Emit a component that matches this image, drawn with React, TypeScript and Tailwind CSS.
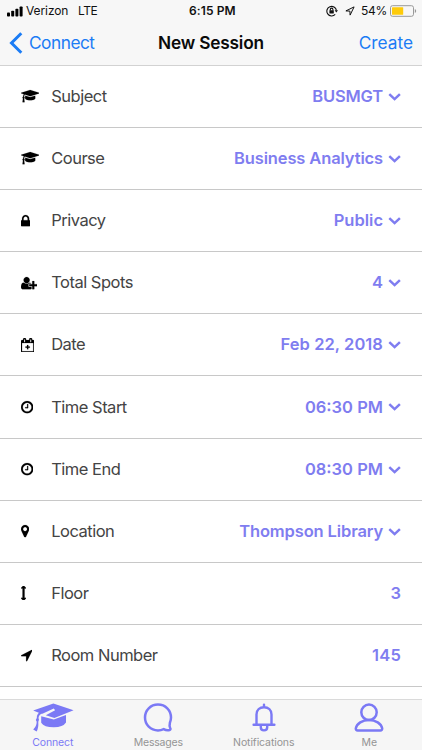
import React from 'react';

interface IconShape {
  viewBox: string;
  width: number;
  path: string;
}

interface SessionField {
  icon: IconShape;
  label: string;
  value: string;
  spacing: string;
  hasPicker: boolean;
}

const cap: IconShape = {
  viewBox: '0 0 2304 1792',
  width: 18.4,
  path: 'M1774 836l18 316q4 69-82 128t-235 93.5-323 34.5-323-34.5-235-93.5-82-128l18-316 574 181q22 7 48 7t48-7zm530-324q0 23-22 31l-1120 352q-4 1-10 1t-10-1l-652-206q-43 34-71 111.5t-34 178.5q63 36 63 109 0 69-58 107l58 433q2 14-8 25-9 11-24 11h-192q-15 0-24-11-10-11-8-25l58-433q-58-38-58-107 0-73 65-111 11-207 98-330l-333-104q-22-8-22-31t22-31l1120-352q4-1 10-1t10 1l1120 352q22 8 22 31z',
};

const lock: IconShape = {
  viewBox: '320 0 1152 1792',
  width: 9.2,
  path: 'M640 768h512v-192q0-106-75-181t-181-75-181 75-75 181v192zm832 96v576q0 40-28 68t-68 28h-960q-40 0-68-28t-28-68v-576q0-40 28-68t68-28h32v-192q0-184 132-316t316-132 316 132 132 316v192h32q40 0 68 28t28 68z',
};

const userPlus: IconShape = {
  viewBox: '0 0 2048 1792',
  width: 16.4,
  path: 'M704 896q-159 0-271.5-112.5t-112.5-271.5 112.5-271.5 271.5-112.5 271.5 112.5 112.5 271.5-112.5 271.5-271.5 112.5zm960 128h352q13 0 22.5 9.5t9.5 22.5v192q0 13-9.5 22.5t-22.5 9.5h-352v352q0 13-9.5 22.5t-22.5 9.5h-192q-13 0-22.5-9.5t-9.5-22.5v-352h-352q-13 0-22.5-9.5t-9.5-22.5v-192q0-13 9.5-22.5t22.5-9.5h352v-352q0-13 9.5-22.5t22.5-9.5h192q13 0 22.5 9.5t9.5 22.5v352zm-736 224q0 52 38 90t90 38h256v238q-68 50-171 50h-874q-121 0-194-69t-73-190q0-53 3.5-103.5t14-109 26.5-108.5 43-97.5 62-81 85.5-53.5 111.5-20q19 0 39 17 79 61 154.5 91.5t164.5 30.5 164.5-30.5 154.5-91.5q20-17 39-17 132 0 217 96h-223q-52 0-90 38t-38 90v192z',
};

const calendar: IconShape = {
  viewBox: '64 0 1664 1792',
  width: 13.3,
  path: 'M192 1664h1408v-1024h-1408v1024zm384-1152v-288q0-14-9-23t-23-9h-64q-14 0-23 9t-9 23v288q0 14 9 23t23 9h64q14 0 23-9t9-23zm768 0v-288q0-14-9-23t-23-9h-64q-14 0-23 9t-9 23v288q0 14 9 23t23 9h64q14 0 23-9t9-23zm384-128v1280q0 52-38 90t-90 38h-1408q-52 0-90-38t-38-90v-1280q0-52 38-90t90-38h128v-96q0-66 47-113t113-47h64q66 0 113 47t47 113v96h384v-96q0-66 47-113t113-47h64q66 0 113 47t47 113v96h128q52 0 90 38t38 90zM820 880h152v196h196v152h-196v196h-152v-196h-196v-152h196z',
};

const clock: IconShape = {
  viewBox: '128 0 1536 1792',
  width: 12.3,
  path: 'M1024 544v448q0 14-9 23t-23 9h-320q-14 0-23-9t-9-23v-64q0-14 9-23t23-9h224v-352q0-14 9-23t23-9h64q14 0 23 9t9 23zm416 352q0-148-73-273t-198-198-273-73-273 73-198 198-73 273 73 273 198 198 273 73 273-73 198-198 73-273zm224 0q0 209-103 385.5t-279.5 279.5-385.5 103-385.5-103-279.5-279.5-103-385.5 103-385.5 279.5-279.5 385.5-103 385.5 103 279.5 279.5 103 385.5z',
};

const marker: IconShape = {
  viewBox: '384 0 1024 1792',
  width: 8.2,
  path: 'M1152 640q0-106-75-181t-181-75-181 75-75 181 75 181 181 75 181-75 75-181zm256 0q0 109-33 179l-364 774q-16 33-47.5 52t-67.5 19-67.5-19-46.5-52l-365-774q-33-70-33-179 0-212 150-362t362-150 362 150 150 362z',
};

const arrowsV: IconShape = {
  viewBox: '448 0 640 1792',
  width: 5.1,
  path: 'M1088 256q0 26-19 45t-45 19h-128v1152h128q26 0 45 19t19 45-19 45l-256 256q-19 19-45 19t-45-19l-256-256q-19-19-19-45t19-45 45-19h128v-1152h-128q-26 0-45-19t-19-45 19-45l256-256q19-19 45-19t45 19l256 256q19 19 19 45z',
};

const locationArrow: IconShape = {
  viewBox: '192 0 1408 1792',
  width: 11.3,
  path: 'M1593 349l-640 1280q-17 35-57 35-5 0-15-2-22-5-35.5-22.5t-13.5-39.5v-576h-576q-22 0-39.5-13.5t-22.5-35.5 4-42 29-30l1280-640q13-7 29-7 27 0 45 19 15 14 18.5 34.5t-6.5 39.5z',
};

const fields: SessionField[] = [
  { icon: cap, label: 'Subject', value: 'BUSMGT', spacing: 'tracking-[-0.15px]', hasPicker: true },
  { icon: cap, label: 'Course', value: 'Business Analytics', spacing: 'tracking-[-0.13px]', hasPicker: true },
  { icon: lock, label: 'Privacy', value: 'Public', spacing: 'tracking-normal', hasPicker: true },
  { icon: userPlus, label: 'Total Spots', value: '4', spacing: 'tracking-normal', hasPicker: true },
  { icon: calendar, label: 'Date', value: 'Feb 22, 2018', spacing: 'tracking-[0.06px]', hasPicker: true },
  { icon: clock, label: 'Time Start', value: '06:30 PM', spacing: 'tracking-normal', hasPicker: true },
  { icon: clock, label: 'Time End', value: '08:30 PM', spacing: 'tracking-normal', hasPicker: true },
  { icon: marker, label: 'Location', value: 'Thompson Library', spacing: 'tracking-[-0.13px]', hasPicker: true },
  { icon: arrowsV, label: 'Floor', value: '3', spacing: 'tracking-normal', hasPicker: false },
  { icon: locationArrow, label: 'Room Number', value: '145', spacing: 'tracking-[0.2px]', hasPicker: false },
];

const FieldRow = ({ field }: { field: SessionField }) => (
  <div className="flex h-[62.1px] shrink-0 items-center border-b border-[#c8c8c8] pl-[20.7px] pr-[21px]">
    <div className="flex w-[30.5px] shrink-0">
      <svg viewBox={field.icon.viewBox} width={field.icon.width} height={14.3} fill="#000" stroke="#000" strokeWidth="20">
        <path d={field.icon.path} />
      </svg>
    </div>
    <span className="text-[16.5px] tracking-[-0.5px] text-[#444]">{field.label}</span>
    <span className={`ml-auto text-[16.5px] font-semibold text-[#7f7df0] ${field.spacing}`}>{field.value}</span>
    {field.hasPicker && (
      <svg className="ml-[5px] mt-px" width="13" height="8" viewBox="0 0 13 8" fill="none" stroke="#7f7df0" strokeWidth="2.5">
        <path d="M1.3 1.2L6.6 6.1L11.9 1.2" />
      </svg>
    )}
  </div>
);

const StatusBar = () => (
  <div className="flex h-[22px] items-center pl-[7px] pr-[5px] text-[12px] text-[#111]">
    <svg width="16" height="11" viewBox="0 0 16 11" fill="#000">
      <rect x="0" y="6.5" width="3" height="4" rx="0.8" />
      <rect x="4.2" y="4.7" width="3" height="5.8" rx="0.8" />
      <rect x="8.4" y="2.7" width="3" height="7.8" rx="0.8" />
      <rect x="12.6" y="0.4" width="3" height="10.1" rx="0.8" />
    </svg>
    <span className="ml-[3px] w-[52px] tracking-[-0.1px]">Verizon</span>
    <span className="w-[20px] tracking-[-0.5px]">LTE</span>
    <span className="ml-[91px] w-[50px] whitespace-nowrap font-semibold tracking-[0.1px]">6:15 PM</span>
    <svg className="ml-auto" width="12" height="12" viewBox="0 0 12 12" fill="none" stroke="#111" strokeWidth="1.1">
      <path d="M9.2 9.4A4.8 4.8 0 1 1 10.4 5.4" />
      <path d="M8.6 5.2h3.4l-1.7 2.2z" fill="#111" stroke="none" />
      <path d="M4.3 5.5V4.4a1.3 1.3 0 0 1 2.6 0v1.1" />
      <rect x="3.4" y="5.2" width="4.4" height="3.2" rx="0.4" fill="#111" stroke="none" />
    </svg>
    <svg className="ml-[7px]" width="10" height="10" viewBox="0 0 10 10" fill="none" stroke="#111" strokeWidth="1" strokeLinejoin="round">
      <path d="M9.1 0.9L0.9 4.9L4.9 5.1L5.1 9.1Z" />
    </svg>
    <span className="ml-[6px] tracking-[-0.3px]">54%</span>
    <svg className="ml-[3px]" width="27" height="12" viewBox="0 0 27 12" fill="none">
      <rect x="0.5" y="0.7" width="23" height="10.6" rx="2" stroke="#999" />
      <rect x="2" y="2.2" width="11.2" height="7.6" rx="0.6" fill="#fecb0a" />
      <path d="M24.8 4v4q1.4-0.6 1.4-2t-1.4-2z" fill="#999" />
    </svg>
  </div>
);

const NavBar = () => (
  <div className="relative flex h-[42px] items-center justify-between pl-[9px] pr-[9px] text-[17.3px] text-[#1b7cf5]">
    <div className="flex items-center">
      <svg width="14" height="22" viewBox="0 0 14 22" fill="none" stroke="#1b7cf5" strokeWidth="3">
        <path d="M12.3 1.2L2.5 11L12.3 20.8" />
      </svg>
      <span className="ml-[6px] tracking-[-0.5px]">Connect</span>
    </div>
    <span>Create</span>
    <span className="absolute inset-x-0 text-center font-semibold tracking-[-0.2px] text-[#0a0a0a]">New Session</span>
  </div>
);

const TabBar = () => (
  <div className="grid h-[51px] shrink-0 grid-cols-4 border-t border-[#dadada] bg-[#f6f6f6] pt-[3px] text-[10.5px] leading-[13px] tracking-[-0.1px] text-[#949494]">
    <div className="flex flex-col items-center text-[#7b79f5]">
      <svg width="42" height="30" viewBox="0 0 42 30" fill="#7b79f5">
        <path d="M21.4 0.4L41.6 7.2L22.4 14.9L13.8 12.2L23.1 7.2L21.8 5.4L10.4 10.8L7.4 9.9L1.2 7.5Z" />
        <path d="M9.2 13.2L21.8 16.6L34 12.1V19.6Q31 24.3 21.8 24.3Q12 24.3 9.2 19.8Z" />
        <path d="M8.2 8.6Q4.6 11.2 4.8 15L3.8 17L4.7 18.8Q4.6 23.4 1.2 26.6L4.6 28.6Q6.7 25 6.3 18.8L7 16.8L6.5 15Q6.8 11.6 10 10.4Z" />
      </svg>
      <span className="mt-[3px]">Connect</span>
    </div>
    <div className="flex flex-col items-center">
      <svg width="30" height="30" viewBox="0 0 30 30" fill="none" stroke="#7b79f5" strokeWidth="2.5" strokeLinejoin="round">
        <path d="M15 1.6C7.6 1.6 2 7.2 2 14.5S7.6 27.4 15 27.4C17.2 27.4 19 26.9 20.7 26.1C22.6 27.2 24.7 27.5 26.6 27C27.6 26.7 27.7 26 27.2 25.1C26.5 23.7 26.5 21.4 26.9 19.7C27.6 18 28 16.3 28 14.5C28 7.2 22.4 1.6 15 1.6Z" />
      </svg>
      <span className="mt-[3px] tracking-[-0.2px]">Messages</span>
    </div>
    <div className="flex flex-col items-center">
      <svg width="26" height="30" viewBox="0 0 26 30" fill="none" stroke="#7b79f5" strokeWidth="2.4" strokeLinejoin="round" strokeLinecap="round">
        <path d="M13 1.6V3.6M5.5 21V11.4C5.5 7 8.8 4.2 13 4.2S20.5 7 20.5 11.4V21" />
        <path d="M2.6 21.7H23.4M9.8 22.4V24.2C9.8 26.2 11.2 27.4 13 27.4S16.2 26.2 16.2 24.2V22.4" />
      </svg>
      <span className="mt-[3px]">Notifications</span>
    </div>
    <div className="flex flex-col items-center">
      <svg width="30" height="30" viewBox="0 0 30 30" fill="none" stroke="#7b79f5" strokeWidth="2.5" strokeLinejoin="round">
        <circle cx="15" cy="9.3" r="7.7" />
        <path d="M15 17C8.4 17 2.7 20.4 1.8 25.4C1.7 26.7 2.4 27.4 3.6 27.4H26.4C27.6 27.4 28.3 26.7 28.2 25.4C27.3 20.4 21.6 17 15 17Z" />
      </svg>
      <span className="mt-[3px]">Me</span>
    </div>
  </div>
);

const App = () => {
  return (
    <div className="flex h-[750px] w-[422px] flex-col overflow-hidden bg-white font-['Inter',sans-serif]">
      <div className="h-[65.95px] shrink-0 border-b border-[#d2d2d2] bg-[#f7f7f7]">
        <StatusBar />
        <NavBar />
      </div>
      <div className="flex min-h-0 flex-1 flex-col overflow-hidden">
        {fields.map((field) => (
          <FieldRow key={field.label} field={field} />
        ))}
      </div>
      <TabBar />
    </div>
  );
};

export default App;
